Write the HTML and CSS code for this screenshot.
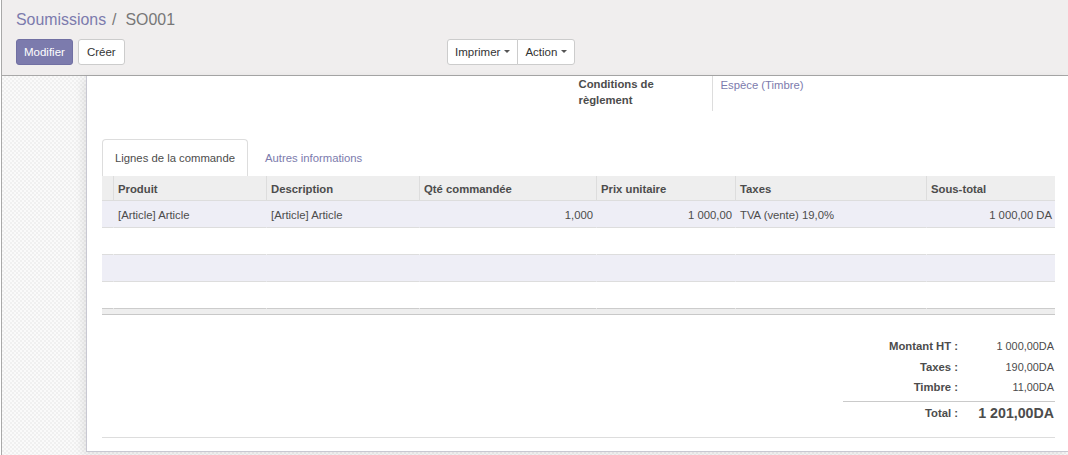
FILE: index.html
```html
<!DOCTYPE html>
<html lang="fr">
<head>
<meta charset="utf-8">
<title>Soumissions / SO001</title>
<link rel="stylesheet" href="styles.css">
</head>
<body>
<div class="app">
  <header class="cp">
    <ol class="breadcrumb">
      <li class="bc-link">Soumissions</li>
      <li class="bc-sep">/</li>
      <li class="bc-active">SO001</li>
    </ol>
    <div class="cp-bottom">
      <div class="cp-buttons">
        <button class="btn btn-primary">Modifier</button>
        <button class="btn btn-default">Créer</button>
      </div>
      <div class="btn-group">
        <button class="btn btn-default btn-first">Imprimer<span class="caret"></span></button>
        <button class="btn btn-default btn-last">Action<span class="caret"></span></button>
      </div>
    </div>
  </header>

  <div class="main">
    <div class="sheet">
      <div class="group">
        <div class="group-left"></div>
        <div class="group-right">
          <div class="lbl">Conditions de règlement</div>
          <div class="val">Espèce (Timbre)</div>
        </div>
      </div>

      <ul class="tabs">
        <li class="tab active">Lignes de la commande</li>
        <li class="tab">Autres informations</li>
      </ul>

      <table class="lines">
        <colgroup>
          <col class="c-handle"><col class="c-prod"><col class="c-desc"><col class="c-qty"><col class="c-price"><col class="c-tax"><col class="c-sub">
        </colgroup>
        <thead>
          <tr>
            <th class="handle"></th>
            <th>Produit</th>
            <th>Description</th>
            <th>Qté commandée</th>
            <th>Prix unitaire</th>
            <th>Taxes</th>
            <th>Sous-total</th>
          </tr>
        </thead>
        <tbody>
          <tr class="odd">
            <td class="handle"></td>
            <td>[Article] Article</td>
            <td>[Article] Article</td>
            <td class="num">1,000</td>
            <td class="num">1 000,00</td>
            <td>TVA (vente) 19,0%</td>
            <td class="num">1 000,00 DA</td>
          </tr>
          <tr>
            <td class="handle"></td><td>&nbsp;</td><td></td><td></td><td></td><td></td><td></td>
          </tr>
          <tr class="odd">
            <td class="handle"></td><td>&nbsp;</td><td></td><td></td><td></td><td></td><td></td>
          </tr>
          <tr class="last">
            <td class="handle"></td><td>&nbsp;</td><td></td><td></td><td></td><td></td><td></td>
          </tr>
        </tbody>
      </table>
      <div class="lines-foot"></div>

      <table class="totals">
        <tr>
          <td class="t-lbl">Montant HT :</td>
          <td class="t-val">1 000,00DA</td>
        </tr>
        <tr>
          <td class="t-lbl">Taxes :</td>
          <td class="t-val">190,00DA</td>
        </tr>
        <tr class="t-last">
          <td class="t-lbl">Timbre :</td>
          <td class="t-val">11,00DA</td>
        </tr>
        <tr class="t-total">
          <td class="t-lbl">Total :</td>
          <td class="t-val">1 201,00DA</td>
        </tr>
      </table>

      <div class="sheet-end"></div>
    </div>
  </div>
</div>
</body>
</html>
```

FILE: styles.css
```css
html, body {
  margin: 0;
  padding: 0;
}

body {
  font-family: "Liberation Sans", Arial, sans-serif;
  font-size: 11.3px;
  color: #4c4c4c;
  background: #ffffff;
}

.app {
  margin-left: 1px;
  border-left: 1px solid #a9a9a9;
  height: 455px;
  display: flex;
  flex-direction: column;
  overflow: hidden;
}

/* Control panel */
.cp {
  box-sizing: border-box;
  height: 76px;
  flex: none;
  background: #f0eeee;
  border-bottom: 1px solid #a8a8a8;
  padding: 10px 14px 0 14px;
}

.breadcrumb {
  margin: 0;
  padding: 0;
  list-style: none;
  display: flex;
  font-size: 15.9px;
  line-height: 20px;
}

.bc-link {
  color: #7c7bad;
}

.bc-sep {
  color: #777777;
  margin: 0 9px 0 6px;
}

.bc-active {
  color: #777777;
}

.cp-bottom {
  display: grid;
  grid-template-columns: 431px auto;
  justify-content: start;
  margin-top: 9px;
}

.cp-buttons {
  display: flex;
  gap: 5px;
}

.btn {
  box-sizing: border-box;
  height: 26px;
  font-family: inherit;
  font-size: 11.5px;
  line-height: 16px;
  padding: 4px 8px;
  border: 1px solid #cccccc;
  border-radius: 3px;
  background: #ffffff;
  color: #333333;
  cursor: pointer;
}

.btn-primary {
  padding: 4px 7px;
  background: #7c7bad;
  border-color: #7170a3;
  color: #ffffff;
}

.btn-group {
  display: flex;
}

.btn-group .btn {
  padding: 4px 7px;
}

.btn-first {
  border-radius: 3px 0 0 3px;
}

.btn-last {
  border-radius: 0 3px 3px 0;
  margin-left: -1px;
}

.caret {
  display: inline-block;
  width: 0;
  height: 0;
  margin-left: 4px;
  vertical-align: middle;
  border-top: 3px solid #555555;
  border-left: 3px solid transparent;
  border-right: 3px solid transparent;
  position: relative;
  top: -1px;
}

/* Main area */
.main {
  flex: 1;
  display: flex;
  align-items: flex-start;
  background-color: #f7f7f7;
  background-image: repeating-conic-gradient(#f0f0f0 0 25%, #fafafa 0 50%);
  background-size: 4px 4px;
}

.sheet {
  flex: 1;
  margin-left: 84px;
  background: #ffffff;
  border-left: 1px solid #c8c8d2;
  border-bottom: 1px solid #c8c8d2;
  padding: 0 13px 13px 15px;
  box-shadow: -3px 2px 9px rgba(0, 0, 0, 0.09);
}

/* Group */
.group {
  display: grid;
  grid-template-columns: 1fr 1fr;
}

.group-right {
  display: flex;
}

.lbl {
  box-sizing: border-box;
  width: 133px;
  flex: none;
  padding-right: 10px;
  padding-bottom: 3px;
  font-weight: bold;
  line-height: 16px;
}

.val {
  border-left: 1px solid #dddddd;
  padding-left: 8px;
  padding-top: 1px;
  line-height: 16px;
  color: #7c7bad;
}

/* Tabs */
.tabs {
  display: flex;
  list-style: none;
  margin: 28px 0 0 0;
  padding: 0;
}

.tab {
  padding: 10px 12px;
  line-height: 16px;
  border: 1px solid transparent;
  border-bottom: 0;
  border-radius: 4px 4px 0 0;
  margin-right: 4px;
  color: #7c7bad;
}

.tab.active {
  border-color: #dddddd;
  color: #4c4c4c;
  background: #ffffff;
}

/* Lines table */
.lines {
  width: 100%;
  table-layout: fixed;
  border-collapse: separate;
  border-spacing: 0;
}

.c-handle { width: 11px; }
.c-prod { width: 153px; }
.c-desc { width: 153px; }
.c-qty { width: 177px; }
.c-price { width: 139px; }
.c-tax { width: 191px; }
.c-sub { width: 129px; }

.lines th {
  background: #eeeeee;
  font-weight: bold;
  text-align: left;
  padding: 5px 3px 3px 4px;
  line-height: 16px;
  border-bottom: 1px solid #dddddd;
  border-left: 1px solid #dddddd;
  white-space: nowrap;
  overflow: hidden;
}

.lines td {
  padding: 6px 3px 4px 4px;
  line-height: 16px;
  border-bottom: 1px solid #dddddd;
  border-left: 1px solid transparent;
  white-space: nowrap;
  overflow: hidden;
}

.lines th.handle,
.lines td.handle {
  border-left: 0;
  padding: 0;
}

.lines tr.odd td {
  background: #eeeef6;
}

.lines tr.last td {
  border-bottom-color: #cccccc;
}

.lines td.num {
  text-align: right;
}

.lines-foot {
  height: 5px;
  background: #eeeeee;
  border-bottom: 1px solid #c8c8c8;
}

/* Totals */
.totals {
  margin: 21px 0 0 auto;
  width: 212px;
  border-collapse: collapse;
}

.totals td {
  padding: 2px 0;
  line-height: 16.5px;
  white-space: nowrap;
}

.totals .t-lbl {
  width: 115px;
  text-align: right;
  padding-right: 4px;
  font-weight: bold;
}

.totals .t-val {
  text-align: right;
  padding-right: 1px;
  font-size: 10.9px;
}

.totals .t-last td {
  padding-bottom: 5px;
}

.totals .t-total td {
  border-top: 1px solid #cacaca;
  padding-top: 2px;
  line-height: 18px;
}

.totals .t-total .t-val {
  font-weight: bold;
  font-size: 14.2px;
}

.sheet-end {
  margin-top: 13px;
  border-top: 1px solid #dddddd;
}
```
